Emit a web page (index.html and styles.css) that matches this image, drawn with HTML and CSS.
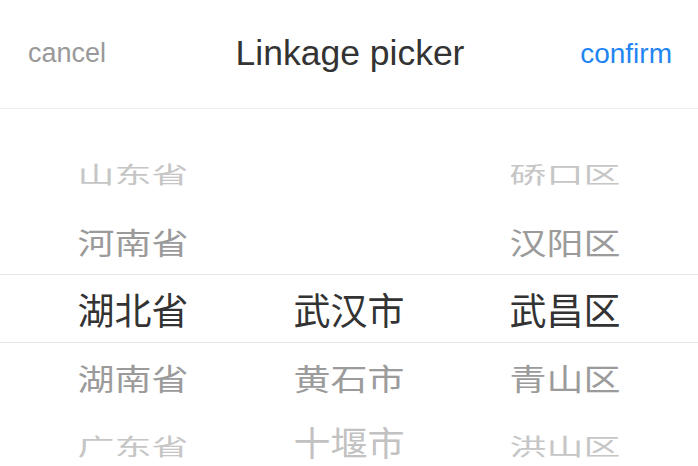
FILE: index.html
```html
<!DOCTYPE html>
<html lang="zh">
<head>
<meta charset="utf-8">
<title>Linkage picker</title>
<link rel="stylesheet" href="styles.css">
</head>
<body>
<div class="picker">
  <header class="picker-header">
    <span class="btn cancel">cancel</span>
    <span class="title">Linkage picker</span>
    <span class="btn confirm">confirm</span>
  </header>
  <div class="picker-body">
    <div class="columns">
      <div class="column">
        <div class="item far"><span>山东省</span></div>
        <div class="item near"><span>河南省</span></div>
        <div class="item active"><span>湖北省</span></div>
        <div class="item near"><span>湖南省</span></div>
        <div class="item far"><span>广东省</span></div>
      </div>
      <div class="column">
        <div class="item far"><span></span></div>
        <div class="item near"><span></span></div>
        <div class="item active"><span>武汉市</span></div>
        <div class="item near"><span>黄石市</span></div>
        <div class="item far tall"><span>十堰市</span></div>
      </div>
      <div class="column">
        <div class="item far"><span>硚口区</span></div>
        <div class="item near"><span>汉阳区</span></div>
        <div class="item active"><span>武昌区</span></div>
        <div class="item near"><span>青山区</span></div>
        <div class="item far"><span>洪山区</span></div>
      </div>
    </div>
    <div class="selection"></div>
  </div>
</div>
</body>
</html>
```

FILE: styles.css
```css
* { box-sizing: border-box; }
html, body {
  margin: 0;
  padding: 0;
  background: #fff;
}
body {
  width: 698px;
  height: 466px;
  overflow: hidden;
  font-family: "Liberation Sans", "Noto Sans CJK SC", sans-serif;
}
.picker {
  display: flex;
  flex-direction: column;
  height: 466px;
}
.picker-header {
  height: 109px;
  flex: none;
  display: flex;
  align-items: center;
  justify-content: space-between;
  padding: 0 26px 1px 28px;
  border-bottom: 1px solid #efefef;
}
.btn {
  font-size: 27px;
  width: 120px;
}
.cancel { color: #999; }
.confirm { color: #1f85f2; text-align: right; font-size: 28px; }
.title {
  font-size: 35.5px;
  color: #333;
}
.picker-body {
  position: relative;
  flex: 1;
  overflow: hidden;
  padding: 30px 25px 0;
}
.columns {
  display: grid;
  grid-template-columns: repeat(3, 1fr);
}
.column {
  display: flex;
  flex-direction: column;
}
.item {
  height: 68px;
  display: flex;
  align-items: center;
  justify-content: center;
  font-family: "Noto Sans CJK SC", sans-serif;
  font-size: 37px;
  line-height: 1;
}
.item span { display: block; }
.item.active { color: #333; }
.item.near { color: #9b9b9b; }
.item.near span { transform: scaleY(0.8); }
.item.far { color: #c6c6c6; }
.item.far span { transform: scaleY(0.6); }
.item.far.tall { color: #c2c2c2; }
.item.far.tall span { transform: translateY(-4px) scaleY(0.92); }
.selection {
  position: absolute;
  left: 0;
  right: 0;
  top: 165px;
  height: 69px;
  border-top: 1px solid #e8e8e8;
  border-bottom: 1px solid #e8e8e8;
  pointer-events: none;
}
```
